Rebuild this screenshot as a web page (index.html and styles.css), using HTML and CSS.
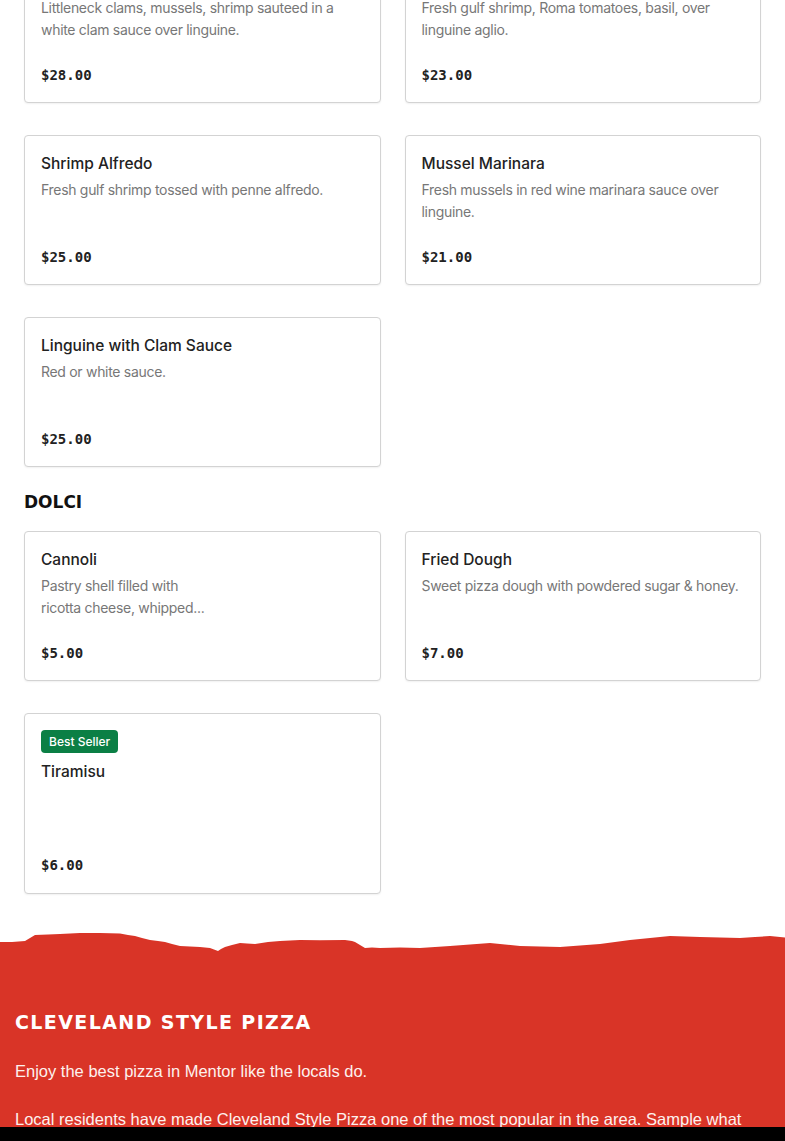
FILE: index.html
```html
<!DOCTYPE html>
<html lang="en">
<head>
<meta charset="utf-8">
<title>Menu</title>
<link rel="stylesheet" href="styles.css">
</head>
<body>
<main class="menu">
  <section class="grid first-row">
    <article class="card">
      <h3 class="card-title">Frutti di Mare</h3>
      <p class="card-desc">Littleneck clams, mussels, shrimp sauteed in a white clam sauce over linguine.</p>
      <p class="card-price">$28.00</p>
    </article>
    <article class="card">
      <h3 class="card-title">Shrimp Aglio</h3>
      <p class="card-desc">Fresh gulf shrimp, Roma tomatoes, basil, over linguine aglio.</p>
      <p class="card-price">$23.00</p>
    </article>
    <article class="card">
      <h3 class="card-title">Shrimp Alfredo</h3>
      <p class="card-desc">Fresh gulf shrimp tossed with penne alfredo.</p>
      <p class="card-price">$25.00</p>
    </article>
    <article class="card">
      <h3 class="card-title">Mussel Marinara</h3>
      <p class="card-desc">Fresh mussels in red wine marinara sauce over linguine.</p>
      <p class="card-price">$21.00</p>
    </article>
    <article class="card">
      <h3 class="card-title">Linguine with Clam Sauce</h3>
      <p class="card-desc">Red or white sauce.</p>
      <p class="card-price">$25.00</p>
    </article>
  </section>

  <h2 class="section-title">DOLCI</h2>
  <section class="grid">
    <article class="card">
      <h3 class="card-title">Cannoli</h3>
      <p class="card-desc">Pastry shell filled with<br>ricotta cheese, whipped...</p>
      <p class="card-price">$5.00</p>
    </article>
    <article class="card">
      <h3 class="card-title">Fried Dough</h3>
      <p class="card-desc">Sweet pizza dough with powdered sugar &amp; honey.</p>
      <p class="card-price">$7.00</p>
    </article>
    <article class="card card-featured">
      <span class="badge">Best Seller</span>
      <h3 class="card-title">Tiramisu</h3>
      <p class="card-desc"></p>
      <p class="card-price">$6.00</p>
    </article>
  </section>
</main>

<section class="promo">
  <svg class="torn" viewBox="0 0 785 24" preserveAspectRatio="none" aria-hidden="true">
    <path fill="#d93427" d="M0 13 L12 13 L25 12 L30 9 L35 6 L48 5.5 L60 5 L80 4 L100 4 L120 4.5 L128 6 L135 7 L142 9 L150 11 L158 12 L165 13 L172 15 L180 17 L190 17.5 L200 18 L210 19 L214 20.5 L218 22 L221 20 L225 18 L232 16 L240 14 L247 14.5 L255 15 L268 13 L280 12 L300 11 L320 11.2 L345 11 L352 12 L355 13 L360 16 L365 19 L372 18.6 L380 19 L400 18.6 L420 19 L435 18 L450 17 L470 15.5 L490 14 L505 15.5 L520 17 L540 17.6 L560 18 L580 16.5 L600 15 L615 13 L630 11 L650 9 L670 7 L685 7.6 L700 8 L720 8.5 L740 9 L755 8 L770 7 L785 8.5 L785 24 L0 24 Z"/>
  </svg>
  <div class="promo-body">
    <h2 class="promo-title">CLEVELAND STYLE PIZZA</h2>
    <p class="promo-text">Enjoy the best pizza in Mentor like the locals do.</p>
    <p class="promo-text">Local residents have made Cleveland Style Pizza one of the most popular in the area. Sample what</p>
  </div>
</section>

<div class="bottom-bar"></div>
</body>
</html>
```
FILE: styles.css
```css
html, body {
  margin: 0;
  padding: 0;
  background: #ffffff;
}

body {
  font-family: "Inter", "Liberation Sans", sans-serif;
  color: #222222;
  overflow: hidden;
}

.menu {
  padding: 0 24px;
  margin-top: -47px;
}

.grid {
  display: grid;
  grid-template-columns: 1fr 1fr;
  column-gap: 24px;
  row-gap: 32px;
}

.card {
  display: flex;
  flex-direction: column;
  align-items: flex-start;
  border: 1px solid #d3d3d3;
  border-radius: 4px;
  box-shadow: 0 1px 2px rgba(0, 0, 0, 0.06);
  padding: 16px;
  background: #fff;
}

.card-featured {
  padding-bottom: 17px;
}

.card-title {
  margin: 0;
  font-size: 15.5px;
  line-height: 24px;
  font-weight: 500;
  color: #222;
}

.card-desc {
  margin: 3px 0 0;
  min-height: 44px;
  font-size: 14px;
  line-height: 22px;
  letter-spacing: -0.3px;
  color: #777777;
  font-weight: 400;
}

.card-price {
  margin: 23px 0 0;
  font-family: "DejaVu Sans Mono", "Liberation Mono", monospace;
  font-weight: bold;
  font-size: 14px;
  line-height: 22px;
  color: #222;
}

.badge {
  display: inline-block;
  background: #0b7f45;
  color: #ffffff;
  font-size: 12px;
  font-weight: 500;
  line-height: 23px;
  padding: 0 8px;
  border-radius: 4px;
  margin-bottom: 7px;
}

.section-title {
  margin: 23px 0 17px;
  font-family: "DejaVu Sans", sans-serif;
  font-weight: 900;
  font-size: 17px;
  line-height: 24px;
  color: #111;
}

.promo {
  margin-top: 35px;
}

.torn {
  display: block;
  width: 100%;
  height: 24px;
}

.promo-body {
  background: #d93427;
  padding: 57px 15px 40px;
  color: #fdf1ee;
}

.promo-title {
  margin: 0;
  font-family: "DejaVu Sans", sans-serif;
  font-weight: bold;
  font-size: 19px;
  line-height: 24px;
  letter-spacing: 1.4px;
  color: #ffffff;
}

.promo-text {
  margin: 25px 0 0;
  font-family: "Liberation Sans", sans-serif;
  font-size: 16.5px;
  line-height: 24px;
  font-weight: 400;
}

.promo-text + .promo-text {
  margin-top: 24px;
}

.bottom-bar {
  position: fixed;
  left: 0;
  right: 0;
  bottom: 0;
  height: 14px;
  background: #000;
}
```
